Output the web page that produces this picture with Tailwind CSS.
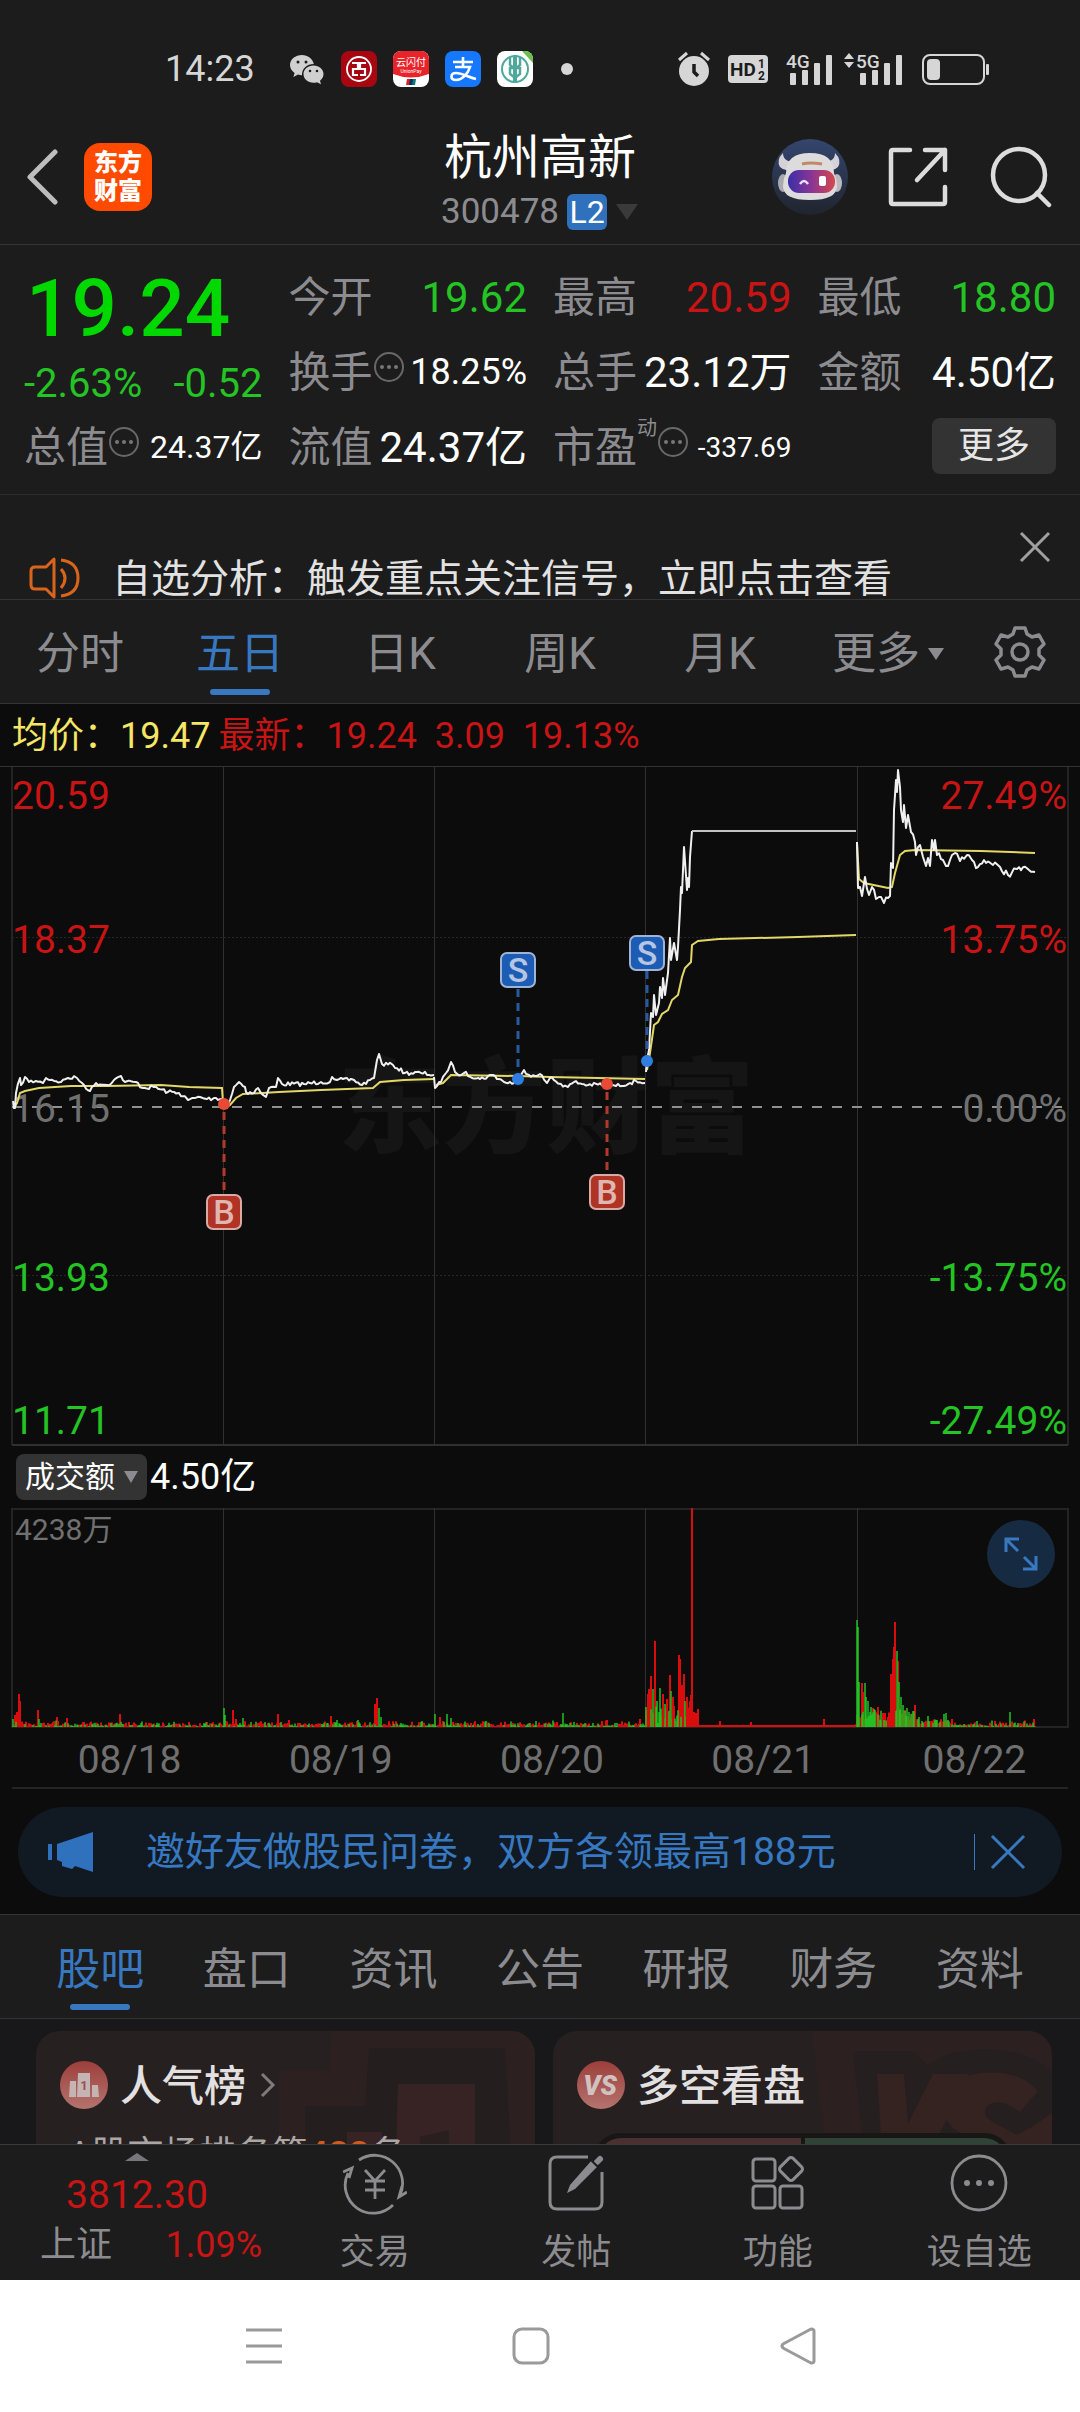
<!DOCTYPE html>
<html lang="zh-CN">
<head>
    <meta charset="UTF-8">
    <meta name="viewport" content="width=device-width, initial-scale=1.0">
    <title>杭州高新 300478</title>
    <script src="https://cdn.jsdelivr.net/npm/@tailwindcss/browser@4"></script>
</head>
<body class="bg-white font-['Roboto','Noto_Sans_CJK_SC',sans-serif] text-white">
    <div class="bg-[#1c1c1c]">
        <!-- Status bar -->
        <div class="flex h-[110px] items-center pt-7 pl-[165px] pr-[90px] text-[#d6d6d6]">
            <span class="w-[124px] text-[36px] leading-10">14:23</span>
            <div class="flex items-center gap-4">
                <svg class="h-9 w-9" viewBox="0 0 36 36" fill="#d0d0d0">
                    <path d="M13 4C6.500 4 1 8.300 1 14c0 3.300 1.800 6 4.600 7.900L4.400 26l4.600-2.400c1.300.4 2.600.6 4 .6-.4-6.600 5-11.300 11.800-11.300C23.500 7.500 18.800 4 13 4z"/>
                    <path d="M24.500 14.500c-5.600 0-10 3.700-10 8.600s4.400 8.700 10 8.700c1.200 0 2.400-.2 3.500-.6l4 2-1-3.500c2.200-1.600 3.500-4 3.500-6.600 0-4.900-4.400-8.600-10-8.600z"/>
                    <g fill="#1c1c1c"><circle cx="9" cy="11" r="1.500"/><circle cx="17" cy="11" r="1.500"/><circle cx="21" cy="20" r="1.300"/><circle cx="28" cy="20" r="1.300"/></g>
                </svg>
                <svg class="h-9 w-9" viewBox="0 0 36 36">
                    <rect width="36" height="36" rx="8" fill="#a80610"/>
                    <g fill="none" stroke="#fff"><circle cx="18" cy="18" r="12" stroke-width="1.800"/><path d="M11 12h6v6h-5v6h5M25 12h-6v6h5v6h-5" stroke-width="2.200"/></g>
                </svg>
                <svg class="h-9 w-9" viewBox="0 0 36 36">
                    <rect width="36" height="36" rx="8" fill="#fff"/>
                    <path d="M8 0h20a8 8 0 0 1 8 8v15q-18 7-36 0V8a8 8 0 0 1 8-8z" fill="#e8232a"/>
                    <text x="18" y="15" font-size="10" fill="#fff" text-anchor="middle">云闪付</text>
                    <text x="18" y="22" font-size="5" fill="#fff" text-anchor="middle">UnionPay</text>
                    <path d="M14 28h4l-1 6h-4z" fill="#d8222a"/><path d="M17 28h4l-1 6h-4z" fill="#12305c"/><path d="M20 28h3l-1 6h-3z" fill="#0b7a77"/>
                </svg>
                <svg class="h-9 w-9" viewBox="0 0 36 36">
                    <rect width="36" height="36" rx="8" fill="#1677ff"/>
                    <path d="M8 11h20M18 6v10M10 16h15c-2 7-8 13-14 13-6 0-6-7 0-7 6 0 12 4 20 6" fill="none" stroke="#fff" stroke-width="2.600"/>
                </svg>
                <svg class="h-9 w-9" viewBox="0 0 36 36">
                    <rect width="36" height="36" rx="8" fill="#fff"/>
                    <path d="M25 0h3a8 8 0 0 1 8 8v4z" fill="#6cc04a"/>
                    <g fill="none" stroke="#4fa89d"><circle cx="18" cy="18" r="13" stroke-width="2"/><path d="M18 4v28" stroke-width="4"/><path d="M13 6v8l5 4 5-4V6M13 17v6l5 4 5-4v-6z" stroke-width="2.500"/></g>
                </svg>
                <span class="ml-3 h-3 w-3 rounded-full bg-[#d6d6d6]"></span>
            </div>
            <div class="ml-auto flex items-center gap-[18px]">
                <svg class="h-9 w-8" viewBox="0 0 32 36" fill="#d6d6d6">
                    <circle cx="16" cy="20" r="15"/><path d="M1 9l8-7M31 9l-8-7" stroke="#d6d6d6" stroke-width="3"/>
                    <path d="M16 13v8l4 4" fill="none" stroke="#1c1c1c" stroke-width="3.500"/>
                </svg>
                <svg class="h-7 w-10" viewBox="0 0 40 28">
                    <rect width="40" height="28" rx="4" fill="#d6d6d6"/>
                    <g fill="#1c1c1c" font-weight="700"><text x="2" y="21" font-size="19">HD</text><text x="30" y="13" font-size="12">1</text><text x="30" y="25" font-size="12">2</text></g>
                </svg>
                <svg class="h-9 w-12" viewBox="0 0 48 36" fill="#d6d6d6">
                    <text x="0" y="17" font-size="19" font-weight="500">4G</text>
                    <rect x="4" y="22" width="6" height="12" rx="1"/><rect x="16" y="19" width="6" height="15" rx="1"/><rect x="28" y="12" width="6" height="22" rx="1"/><rect x="40" y="4" width="6" height="30" rx="1"/>
                </svg>
                <svg class="-ml-2 h-9 w-15" viewBox="0 0 60 36" fill="#d6d6d6">
                    <path d="M0 8l5-6 5 6zM0 11l5 6 5-6z"/>
                    <text x="12" y="17" font-size="19" font-weight="500">5G</text>
                    <rect x="16" y="22" width="6" height="12" rx="1"/><rect x="28" y="19" width="6" height="15" rx="1"/><rect x="40" y="12" width="6" height="22" rx="1"/><rect x="52" y="4" width="6" height="30" rx="1"/>
                </svg>
                <svg class="h-8 w-17" viewBox="0 0 68 32">
                    <rect x="1" y="2" width="61" height="29" rx="7" fill="none" stroke="#d6d6d6" stroke-width="2"/>
                    <rect x="5" y="6" width="13" height="21" rx="4" fill="#d6d6d6"/><rect x="64" y="11" width="3" height="11" rx="1" fill="#d6d6d6"/>
                </svg>
            </div>
        </div>

        <!-- Header -->
        <header class="grid h-[135px] grid-cols-[1fr_auto_1fr] items-center border-b border-[#333] px-6">
            <div class="flex items-center gap-6">
                <button aria-label="返回">
                    <svg class="h-14 w-9" viewBox="0 0 36 56" fill="none" stroke="#bdbdbd" stroke-width="5" stroke-linecap="round" stroke-linejoin="round"><path d="M31 3L6 28l25 25"/></svg>
                </button>
                <a href="#" class="flex h-17 w-17 flex-col items-center justify-center rounded-2xl bg-[#ff4a00] text-[24px] leading-7 font-black">
                    <span>东方</span><span>财富</span>
                </a>
            </div>
            <div class="flex flex-col items-center gap-2 pt-[6px]">
                <h1 class="text-[48px] leading-14">杭州高新</h1>
                <div class="flex items-center gap-2 text-[#8c8c90]">
                    <span class="text-[35px] leading-9">300478</span>
                    <span class="flex h-9 w-10 items-center justify-center rounded-md bg-[#3071bd] text-[32px] text-white">L2</span>
                    <svg class="h-4 w-6" viewBox="0 0 24 16"><path d="M1 0h22L12 16z" fill="#3a3a3a"/></svg>
                </div>
            </div>
            <div class="flex items-center justify-end gap-10 pr-1">
                <button aria-label="智能助手">
                    <svg class="h-[76px] w-[76px]" viewBox="0 0 76 76">
                        <defs>
                            <linearGradient id="visor"><stop offset="0" stop-color="#3a2fa8"/><stop offset=".5" stop-color="#8a3594"/><stop offset="1" stop-color="#d5484e"/></linearGradient>
                            <linearGradient id="orb" x2="0" y2="1"><stop offset="0" stop-color="#34466e"/><stop offset="1" stop-color="#20242e"/></linearGradient>
                        </defs>
                        <circle cx="38" cy="38" r="38" fill="url(#orb)"/>
                        <path d="M11 14q-7 7-3 14 4 4 9 3l6-8q-12 0-12-9zM63 14q7 7 3 14-4 4-9 3l-6-8q12 0 12-9z" fill="#d4d2d6"/>
                        <ellipse cx="11" cy="44" rx="5" ry="9" fill="#a9a9af"/><ellipse cx="65" cy="44" rx="5" ry="9" fill="#b9b9bf"/>
                        <path d="M14 34q0-20 24-20t24 20q3 6 3 13 0 14-27 14T11 47q0-7 3-13z" fill="#dedbdd"/>
                        <rect x="16" y="31" width="47" height="23" rx="11" fill="url(#visor)"/>
                        <path d="M28 45q4-6 8 0" fill="none" stroke="#e8e0ff" stroke-width="2.500"/><rect x="47" y="37" width="7" height="10" rx="2" fill="#fff"/>
                        <path d="M30 25q8-2 20 0" fill="none" stroke="#c08a66" stroke-width="3"/>
                    </svg>
                </button>
                <button aria-label="分享">
                    <svg class="h-[62px] w-[62px]" viewBox="0 0 62 62" fill="none" stroke="#dcdcdc" stroke-width="4.500" stroke-linecap="round" stroke-linejoin="round">
                        <path d="M22 4H5q-2 0-2 2v50q0 2 2 2h50q2 0 2-2V41M37 4h20v20M57 4L29 34"/>
                    </svg>
                </button>
                <button aria-label="搜索">
                    <svg class="h-[62px] w-[62px]" viewBox="0 0 62 62" fill="none" stroke="#dcdcdc" stroke-width="4.500" stroke-linecap="round"><circle cx="29" cy="29" r="26"/><path d="M47 47l12 12"/></svg>
                </button>
            </div>
        </header>

        <!-- Quote -->
        <section class="grid grid-cols-4 gap-x-[26px] border-b border-[#2c2c2c] px-6 pt-[15px] pb-[9px] text-[42px] leading-[75px] whitespace-nowrap">
            <div class="row-span-2">
                <div class="pl-[2px] text-[80px] leading-[98px] font-medium text-[#00d800]">19.24</div>
                <div class="flex justify-between text-[40px] leading-[52px] text-[#23c423]"><span>-2.63%</span><span>-0.52</span></div>
            </div>
            <div class="flex justify-between"><span class="text-[#8c8c90]">今开</span><span class="text-[#23c423]">19.62</span></div>
            <div class="flex justify-between"><span class="text-[#8c8c90]">最高</span><span class="text-[#c81414]">20.59</span></div>
            <div class="flex justify-between"><span class="text-[#8c8c90]">最低</span><span class="text-[#23c423]">18.80</span></div>

            <div class="flex items-center">
                <span class="text-[#8c8c90]">换手</span>
                <svg class="mb-3 h-8 w-8" viewBox="0 0 32 32"><circle cx="16" cy="16" r="14" fill="none" stroke="#68686a" stroke-width="2"/><g fill="#77777a"><circle cx="9" cy="16" r="2"/><circle cx="16" cy="16" r="2"/><circle cx="23" cy="16" r="2"/></g></svg>
                <span class="ml-auto text-[36px]">18.25%</span>
            </div>
            <div class="flex justify-between"><span class="text-[#8c8c90]">总手</span><span>23.12万</span></div>
            <div class="flex justify-between"><span class="text-[#8c8c90]">金额</span><span>4.50亿</span></div>

            <div class="flex items-center">
                <span class="text-[#8c8c90]">总值</span>
                <svg class="mb-3 h-8 w-8" viewBox="0 0 32 32"><circle cx="16" cy="16" r="14" fill="none" stroke="#68686a" stroke-width="2"/><g fill="#77777a"><circle cx="9" cy="16" r="2"/><circle cx="16" cy="16" r="2"/><circle cx="23" cy="16" r="2"/></g></svg>
                <span class="ml-auto text-[32px]">24.37亿</span>
            </div>
            <div class="flex justify-between"><span class="text-[#8c8c90]">流值</span><span>24.37亿</span></div>
            <div class="flex items-center">
                <span class="text-[#8c8c90]">市盈</span>
                <span class="self-start text-[20px] leading-9 text-[#8c8c90]">动</span>
                <svg class="mb-3 h-8 w-8" viewBox="0 0 32 32"><circle cx="16" cy="16" r="14" fill="none" stroke="#68686a" stroke-width="2"/><g fill="#77777a"><circle cx="9" cy="16" r="2"/><circle cx="16" cy="16" r="2"/><circle cx="23" cy="16" r="2"/></g></svg>
                <span class="ml-auto text-[28px]">-337.69</span>
            </div>
            <div class="flex items-center justify-end"><button class="mb-1 h-14 w-[124px] rounded-lg bg-[#333] text-[36px] leading-14 text-[#e6e6e6]">更多</button></div>
        </section>

        <!-- Notice -->
        <div class="flex h-[105px] items-end overflow-hidden border-b border-[#333] pr-7 pl-7 text-[39px] leading-10 text-[#e2e2e2]">
            <svg class="mr-8 h-[42px] w-13" viewBox="0 0 52 42" fill="none" stroke="#d9651c" stroke-width="3" stroke-linejoin="round"><path d="M26 2v38l-8-8H7q-4 0-4-4V14q0-4 4-4h11zM33 12q8 9 0 19M33 3q17 2 17 18T33 39"/></svg>
            <p>自选分析：触发重点关注信号，立即点击查看</p>
            <button class="ml-auto self-center" aria-label="关闭提示"><svg class="h-9 w-9" viewBox="0 0 36 36" stroke="#a0a0a0" stroke-width="3"><path d="M5 4l28 28M33 4L5 32"/></svg></button>
        </div>

        <!-- Period tabs -->
        <nav class="grid h-[104px] grid-cols-[repeat(6,1fr)_120px] border-b border-[#333] text-[44px] text-[#8c8c90]">
            <button class="pt-1">分时</button>
            <button class="relative pt-1 text-[#3878c0]">五日<span class="absolute bottom-2 left-1/2 h-[6px] w-15 -translate-x-1/2 rounded-full bg-[#3878c0]"></span></button>
            <button class="pt-1">日K</button>
            <button class="pt-1">周K</button>
            <button class="pt-1">月K</button>
            <button class="flex items-center justify-center gap-2 pt-1 pl-4">更多<svg class="h-3 w-4" viewBox="0 0 16 12"><path d="M0 0h16L8 12z" fill="#8c8c90"/></svg></button>
            <button class="flex items-center justify-center" aria-label="设置">
                <svg class="h-[52px] w-[52px]" viewBox="0 0 52 52" fill="none" stroke="#8c8c90" stroke-width="3.500" stroke-linejoin="round">
                    <path d="M21 2h10l2 6 5 3 7-2 5 9-5 5v6l5 5-5 9-7-2-5 3-2 6H21l-2-6-5-3-7 2-5-9 5-5v-6l-5-5 5-9 7 2 5-3z"/><circle cx="26" cy="26" r="8"/>
                </svg>
            </button>
        </nav>
    </div>

    <main class="bg-[#0c0c0c]">
        <div class="flex h-[63px] items-center border-b border-[#333] pt-[2px] pl-3 text-[36px] whitespace-pre">
            <span class="mr-2 text-[#f5e665]">均价：19.47</span><span class="text-[#c81414]">最新：19.24  3.09  19.13%</span>
        </div>

        <!-- Price chart -->
        <svg class="block w-full" viewBox="0 0 1080 679" fill="none">
            <text x="546" y="378" font-size="104" font-weight="900" fill="#151515" text-anchor="middle">东方财富</text>
            <path d="M12 0v678M1068 0v678" stroke="#242424" stroke-width="2"/>
            <path d="M223.500 0v678M434.500 0v678M645.500 0v678M857.500 0v678" stroke="#303030"/>
            <path d="M12 170.500h1056M12 508.500h1056" stroke="#262626" stroke-dasharray="2 2"/>
            <path d="M12 678h1056" stroke="#303030" stroke-width="2"/>
            <path d="M12 340h1056" stroke="#909090" stroke-width="2" stroke-dasharray="10 10"/>
            <g font-size="39">
                <g fill="#c81414"><text x="12" y="42">20.59</text><text x="12" y="186">18.37</text></g>
                <text x="12" y="355" fill="#707070">16.15</text>
                <g fill="#23c423"><text x="12" y="524">13.93</text><text x="12" y="667">11.71</text></g>
                <g text-anchor="end">
                    <g fill="#c81414"><text x="1067" y="42">27.49%</text><text x="1067" y="186">13.75%</text></g>
                    <text x="1067" y="355" fill="#707070">0.00%</text>
                    <g fill="#23c423"><text x="1067" y="524">-13.75%</text><text x="1067" y="667">-27.49%</text></g>
                </g>
            </g>
            <g id="avgLines" stroke="#e3d767" stroke-width="2"></g>
            <g id="priceLines" stroke="#f0f0f0" stroke-width="2" stroke-linejoin="round"></g>
            <!-- Buy / sell marks -->
            <g stroke-width="3" stroke-dasharray="8 6">
                <path d="M518 222v90M647 204v90" stroke="#285a9e"/>
                <path d="M224 345v82M607 325v82" stroke="#b03a2c"/>
            </g>
            <g fill="#2f7de0"><circle cx="518" cy="312" r="6"/><circle cx="647" cy="294" r="6"/></g>
            <g fill="#e84a36"><circle cx="224" cy="337" r="6"/><circle cx="607" cy="317" r="6"/></g>
            <g stroke-width="2">
                <g fill="#1c5cb4" stroke="#9fb4d4"><rect x="501" y="186" width="34" height="34" rx="6"/><rect x="630" y="169" width="34" height="34" rx="6"/></g>
                <g fill="#b03426" stroke="#d9a9a4"><rect x="207" y="428" width="34" height="34" rx="6"/><rect x="590" y="408" width="34" height="34" rx="6"/></g>
            </g>
            <g font-size="34" font-weight="500" text-anchor="middle">
                <g fill="#b4c6e2"><text x="518" y="215">S</text><text x="647" y="198">S</text></g>
                <g fill="#e0b6b2"><text x="224" y="457">B</text><text x="607" y="437">B</text></g>
            </g>
        </svg>

        <!-- Volume -->
        <div class="flex h-[62px] items-center gap-[3px] pl-4 text-[36px]">
            <div class="relative">
                <select aria-label="指标" class="block h-[46px] w-[131px] appearance-none rounded-lg bg-[#333] pl-[9px] text-[30px] leading-[46px] text-white"><option>成交额</option></select>
                <svg class="pointer-events-none absolute top-[17px] right-[9px] h-3 w-[14px]" viewBox="0 0 14 12"><path d="M0 0h14L7 12z" fill="#8c8c90"/></svg>
            </div>
            <span>4.50亿</span>
        </div>
        <div class="relative">
            <svg class="block w-full" viewBox="0 0 1080 220" fill="none">
                <path d="M12 1h1056v218H12z" stroke="#242424" stroke-width="2"/>
                <path d="M223.500 0v220M434.500 0v220M645.500 0v220M857.500 0v220" stroke="#303030"/>
                <text x="15" y="32" font-size="30" fill="#707070">4238万</text>
                <path id="redBars" stroke="#d90d0d" stroke-width="2"/>
                <path id="greenBars" stroke="#22c022" stroke-width="1.500"/>
            </svg>
            <button aria-label="全屏" class="absolute top-3 right-[25px] flex h-17 w-17 items-center justify-center rounded-full bg-[#162b42]">
                <svg class="h-9 w-9" viewBox="0 0 36 36" fill="none" stroke="#3878c0" stroke-width="3"><path d="M16 3H3v13M3 3l12 12M20 33h13V20M33 33L21 21"/></svg>
            </button>
        </div>
        <div class="grid h-[59px] grid-cols-5 pt-1 pl-6 text-center text-[39px] leading-14 text-[#707070]">
            <span>08/18</span><span>08/19</span><span>08/20</span><span>08/21</span><span>08/22</span>
        </div>
        <hr class="mx-3 border-t-2 border-[#242424]">

        <!-- Promo -->
        <div class="border-b border-[#333] px-[18px] pt-[18px] pb-[17px]">
            <div class="flex h-[90px] items-center rounded-full bg-[#111a23] pr-9 pl-[30px] text-[39px] text-[#3878c0]">
                <svg class="mr-13 h-10 w-[46px]" viewBox="0 0 46 40" fill="#3071bd"><path d="M0 12h4v16H0zM9 12L45 0v40l-18-6-3 3-10-3v-4l-5-2z"/></svg>
                <a href="#">邀好友做股民问卷，双方各领最高188元</a>
                <span class="ml-auto h-9 w-px bg-[#3878c0]"></span>
                <button class="ml-[15px]" aria-label="关闭活动"><svg class="h-9 w-9" viewBox="0 0 36 36" stroke="#3878c0" stroke-width="3"><path d="M2 2l32 32M34 2L2 34"/></svg></button>
            </div>
        </div>

        <!-- Content tabs -->
        <nav class="grid h-[104px] grid-cols-7 border-b border-[#333] bg-[#1c1c1c] px-[27px] text-[44px] text-[#8c8c90]">
            <button class="relative pt-[6px] text-[#3878c0]">股吧<span class="absolute bottom-2 left-1/2 h-[6px] w-15 -translate-x-1/2 rounded-full bg-[#3878c0]"></span></button>
            <button class="pt-[6px]">盘口</button>
            <button class="pt-[6px]">资讯</button>
            <button class="pt-[6px]">公告</button>
            <button class="pt-[6px]">研报</button>
            <button class="pt-[6px]">财务</button>
            <button class="pt-[6px]">资料</button>
        </nav>

        <section class="grid h-[125px] grid-cols-2 gap-[18px] overflow-hidden bg-[#18181a] pt-3 pr-7 pl-9">
            <div class="relative h-[200px] overflow-hidden rounded-3xl bg-[#272020] px-6 pt-7">
                <svg class="absolute top-0 right-0 h-[120px] w-[260px]" viewBox="0 0 260 120">
                    <path d="M57 0h203v120H4V39h50z" fill="#2c2120"/><path d="M94 17h136l6 103H30V75h60z" fill="#251e1e"/>
                    <path d="M123 53h77v67h-79zM72 101h35v19H72z" fill="#372323"/><path d="M145 106l29-7v21h-29z" fill="#2a1f1f"/>
                </svg>
                <a href="#" class="relative flex items-center text-[42px] leading-12 font-medium text-[#e2e0e0]">
                    <svg class="mr-3 h-12 w-12" viewBox="0 0 48 48"><defs><linearGradient id="badge" x2="0" y2="1"><stop offset="0" stop-color="#9c3f3b"/><stop offset="1" stop-color="#b5736e"/></linearGradient></defs><circle cx="24" cy="24" r="24" fill="url(#badge)"/><path d="M10 20h6v16H9zM18 12h12v24H17zM32 24h6l1 12h-7z" fill="#c4b4b3"/><text x="24" y="29" font-size="13" font-weight="700" fill="#9c4f4b" text-anchor="middle">1</text></svg>
                    <span class="pt-1">人气榜</span>
                    <svg class="ml-3 h-7 w-5" viewBox="0 0 20 28" fill="none" stroke="#807a7a" stroke-width="3"><path d="M4 3l11 11L4 25"/></svg>
                </a>
                <p class="relative mt-[22px] pl-2 text-[36px] leading-11 whitespace-nowrap text-[#aaa6a6]">A股市场排名第<span class="font-bold text-[#d35a1e]">488</span>名</p>
            </div>
            <div class="relative h-[200px] overflow-hidden rounded-3xl bg-[#272020] px-6 pt-7">
                <svg class="absolute top-0 right-0 h-[120px] w-[240px]" viewBox="0 0 240 120">
                    <path d="M0 0h240v120H14z" fill="#2c2120"/><path d="M41 20h60l15 14q20-16 60-16 42 2 64 22v80H52z" fill="#261f1f"/>
                    <path d="M65 43h27l4 50 25-50h36l-38 77H70z" fill="#352322"/><path d="M226 60q-20-22-58-18-36 6-36 35 0 14 12 22 14 10 34 14l5 7h57V82l-17 12-18 10-22-12q-16-8-7-18 12-8 32 7z" fill="#352322"/>
                </svg>
                <a href="#" class="relative flex items-center text-[42px] leading-12 font-medium text-[#e2e0e0]">
                    <svg class="mr-3 h-12 w-12" viewBox="0 0 48 48"><circle cx="24" cy="24" r="24" fill="url(#badge)"/><text x="23" y="34" font-size="27" font-weight="900" font-style="italic" fill="#d0c2c1" text-anchor="middle">VS</text></svg>
                    <span class="pt-1">多空看盘</span>
                </a>
                <div class="relative mx-4 mt-[22px] flex h-14 gap-1 overflow-hidden rounded-full border-5 border-[#191616] bg-[#191616]">
                    <span class="flex-1 bg-[#4a3030]"></span><span class="flex-1 bg-[#2f4437]"></span>
                </div>
            </div>
        </section>
    </main>

    <!-- Bottom bar -->
    <footer class="flex h-[136px] border-t border-[#3a3a3a] bg-[#1c1c1c] text-[35px] text-[#8c8c90]">
        <a href="#" class="flex w-[274px] flex-col items-center pt-2 text-[#c81414]">
            <svg class="h-2 w-6" viewBox="0 0 24 8"><path d="M0 8L12 0l12 8z" fill="#77777a"/></svg>
            <span class="mt-3 text-[39px] leading-11">3812.30</span>
            <span class="mt-1 flex w-full justify-between pr-3 pl-10 text-[36px] leading-12"><span class="text-[#8c8c90]">上证</span><span>1.09%</span></span>
        </a>
        <a href="#" class="flex flex-1 flex-col items-center pt-[6px]">
            <svg class="h-16 w-16" viewBox="0 0 64 64" fill="none" stroke="#8c8c90" stroke-width="2.800"><path d="M16 9A28 28 0 0 1 57 44M5 22A28 28 0 0 0 50 54M0 21l9-4-3 10M64 41l-8 5 3-11M22 19l10 11 10-11M32 30v18M22 30h20M22 39h20"/></svg>
            <span class="mt-[14px] leading-12">交易</span>
        </a>
        <a href="#" class="flex flex-1 flex-col items-center pt-[6px]">
            <svg class="h-16 w-16" viewBox="0 0 64 64" fill="none" stroke="#8c8c90" stroke-width="3"><path d="M44 6H13q-7 0-7 7v38q0 7 7 7h38q7 0 7-7V21"/><path d="M23 42l3-8 22-25 6 6-23 23z" fill="#8c8c90" stroke="none"/><path d="M53 11l3-3" stroke-width="6" stroke-linecap="round"/><path d="M47 9l8 8" stroke="#1c1c1c" stroke-width="2"/></svg>
            <span class="mt-[14px] leading-12">发帖</span>
        </a>
        <a href="#" class="flex flex-1 flex-col items-center pt-[6px]">
            <svg class="h-16 w-16" viewBox="0 0 64 64" fill="none" stroke="#8c8c90" stroke-width="3"><rect x="7" y="8" width="22" height="22" rx="3"/><rect x="7" y="35" width="22" height="22" rx="3"/><rect x="34" y="35" width="22" height="22" rx="3"/><rect x="36" y="9" width="18" height="18" rx="3" transform="rotate(45 45 18)"/></svg>
            <span class="mt-[14px] leading-12">功能</span>
        </a>
        <a href="#" class="flex flex-1 flex-col items-center pt-[6px]">
            <svg class="h-16 w-16" viewBox="0 0 64 64" fill="#8c8c90"><circle cx="32" cy="32" r="27" fill="none" stroke="#8c8c90" stroke-width="2.800"/><circle cx="20" cy="32" r="3"/><circle cx="32" cy="32" r="3"/><circle cx="44" cy="32" r="3"/></svg>
            <span class="mt-[14px] leading-12">设自选</span>
        </a>
    </footer>

    <!-- System navigation -->
    <div class="grid h-[132px] grid-cols-3 items-center justify-items-center bg-white pr-[149px] pl-[131px]">
        <button aria-label="最近任务"><svg class="h-10 w-10" viewBox="0 0 40 40" stroke="#9a9a9a" stroke-width="3"><path d="M2 4h36M2 20h36M2 36h36"/></svg></button>
        <button aria-label="主屏幕"><svg class="h-10 w-10" viewBox="0 0 40 40" fill="none" stroke="#9a9a9a" stroke-width="3"><rect x="3" y="3" width="34" height="34" rx="8"/></svg></button>
        <button aria-label="后退"><svg class="h-10 w-10" viewBox="0 0 40 40" fill="none" stroke="#9a9a9a" stroke-width="3" stroke-linejoin="round"><path d="M5 18L33 3q3 0 3 2v30q0 2-3 2L5 22q-2-2 0-4z"/></svg></button>
    </div>

    <script>
        // [x, y] pairs per trading day
        const price = [
            [13,334, 14,341, 15,341, 16,326, 20,311, 21,318, 25,310, 29,315, 36,314, 43,316, 46,311, 61,315, 68,311, 77,311, 82,316, 90,324, 96,316, 107,318, 114,313, 121,309, 125,315, 136,315, 143,321, 154,320, 168,325, 179,326, 188,333, 200,330, 207,332, 214,331, 223,332],
            [224,333, 227,341, 230,333, 234,320, 239,315, 245,320, 246,325, 254,326, 258,321, 261,326, 266,330, 269,321, 276,320, 278,311, 282,317, 304,317, 321,315, 330,315, 332,310, 337,313, 354,313, 362,318, 370,313, 374,311, 377,293, 379,287, 382,297, 393,298, 405,306, 421,306, 434,308],
            [434,310, 435,321, 441,315, 446,306, 451,295, 455,305, 461,308, 464,306, 480,312, 493,308, 504,315, 514,316, 520,311, 524,303, 529,308, 540,307, 547,316, 550,311, 561,317, 568,320, 574,315, 588,318, 607,317, 616,319, 630,316, 636,314, 645,316],
            [646,305, 647,293, 649,283, 651,246, 653,250, 654,228, 656,248, 659,236, 660,220, 662,231, 663,211, 665,228, 668,206, 670,171, 671,193, 674,176, 677,193, 678,180, 680,143, 681,120, 682,126, 684,80, 687,123, 688,111, 689,120, 690,90, 692,64],
            [857,75, 858,121, 860,120, 862,129, 865,110, 869,128, 872,120, 876,132, 879,130, 884,136, 888,131, 890,129, 891,96, 893,101, 894,43, 896,13, 897,25, 898,3, 900,20, 901,43, 903,55, 904,38, 906,61, 908,48, 911,65, 915,75, 916,88, 920,78, 923,90, 926,99, 928,91, 930,99, 932,73, 934,83, 935,73, 937,88, 943,93, 946,99, 950,93, 955,86, 960,94, 967,88, 972,93, 978,100, 984,93, 993,98, 1000,100, 1008,108, 1017,102, 1029,103, 1035,105],
        ];
        const average = [
            [14,341, 17,336, 20,326, 25,324, 39,321, 71,319, 107,319, 161,318, 189,320, 222,321, 223,336],
            [225,341, 230,338, 236,331, 243,327, 279,325, 321,323, 373,321, 380,315, 404,313, 434,312],
            [436,318, 443,316, 451,308, 518,309, 550,310, 645,312],
            [647,303, 650,286, 654,258, 658,255, 662,247, 668,243, 672,233, 678,228, 682,210, 685,201, 691,195, 692,178, 698,174, 719,172, 798,170, 856,168],
            [857,76, 859,112, 864,116, 888,121, 892,120, 895,106, 900,88, 905,84, 915,83, 981,84, 1035,86],
        ];
        // x, height, colour
        const spikes = [
            [13,8,'g'],[15,12,'r'],[17,15,'r'],[19,33,'r'],[20,26,'r'],[38,17,'r'],[39,8,'g'],[57,10,'r'],[67,9,'r'],[120,13,'r'],
            [224,19,'g'],[225,12,'g'],[233,17,'r'],[236,8,'r'],[243,9,'g'],[278,13,'r'],[289,7,'r'],[331,11,'r'],[337,7,'g'],[358,7,'g'],[375,23,'r'],[377,29,'r'],[379,19,'g'],[381,10,'g'],
            [435,13,'g'],[440,10,'r'],[447,13,'g'],[451,9,'g'],[536,6,'g'],[563,14,'g'],[607,7,'r'],[640,8,'r'],
            [646,17,'r'],[648,33,'r'],[649,38,'r'],[651,51,'r'],[653,38,'g'],[655,86,'r'],[657,26,'g'],[660,39,'g'],[663,33,'r'],[667,28,'r'],[670,52,'r'],[671,36,'g'],[673,30,'r'],[679,72,'r'],[680,68,'r'],[682,42,'r'],[684,53,'r'],[685,26,'g'],[687,30,'r'],[691,32,'r'],[692,219,'r'],[694,15,'r'],[696,14,'r'],[697,10,'r'],
            [720,6,'r'],[751,5,'r'],[824,8,'r'],
            [857,107,'g'],[858,100,'g'],[859,45,'g'],[862,44,'r'],[863,35,'r'],[865,44,'g'],[866,30,'g'],[868,26,'g'],[871,20,'g'],[873,19,'r'],[875,17,'g'],[878,20,'r'],[885,14,'r'],[891,53,'r'],[893,68,'r'],[894,80,'r'],[895,105,'r'],[897,76,'g'],[898,66,'r'],[899,45,'g'],[901,30,'g'],[903,22,'g'],[905,16,'g'],[907,19,'g'],[909,15,'g'],[911,13,'g'],[915,22,'r'],[919,10,'g'],[928,11,'g'],[944,13,'g'],[946,14,'g'],[952,8,'r'],[977,6,'g'],[995,6,'r'],[1010,15,'g'],[1034,8,'r'],
        ];

        let seed = 7;
        function rand() {
            seed = (seed * 16807) % 2147483647;
            return seed / 2147483647;
        }

        // Join the points, with some tick noise between them
        function linePath(points, noise) {
            let d = `M${points[0]} ${points[1]}`;
            for (let i = 2; i < points.length; i += 2) {
                const [x0, y0, x1, y1] = points.slice(i - 2, i + 2);
                for (let x = x0 + 2; noise && x < x1 - 1; x += 2) {
                    const y = y0 + (y1 - y0) * (x - x0) / (x1 - x0) + (rand() - 0.5) * noise;
                    d += `L${x} ${y.toFixed(1)}`;
                }
                d += `L${x1} ${y1}`;
            }
            return `<path d="${d}"/>`;
        }

        const limitUp = '<path d="M692 64h164" stroke="#c4c4c4"/>';
        document.getElementById('priceLines').innerHTML = price.map((day, i) => linePath(day, i === 4 ? 7 : 4)).join('') + limitUp;
        document.getElementById('avgLines').innerHTML = average.map(day => linePath(day, 0)).join('');

        function baseHeight(x) {
            if (x > 698 && x < 856) return 2;
            if (x > 645 && x <= 698) return 4 + rand() * 22;
            if (x >= 857 && x < 915) return 4 + rand() * 14;
            if (x >= 915 && x < 950) return 2 + rand() * 6;
            return 1 + rand() * rand() * 6;
        }

        const bars = { r: '', g: '' };
        for (let x = 13; x <= 1035; x++) {
            const up = (x > 686 && x < 857) || rand() > 0.4;
            bars[up ? 'r' : 'g'] += `M${x} 219v-${baseHeight(x).toFixed(1)}`;
        }
        spikes.forEach(([x, h, c]) => { bars[c] += `M${x} 219v-${h}`; });
        document.getElementById('redBars').setAttribute('d', bars.r);
        document.getElementById('greenBars').setAttribute('d', bars.g);
    </script>
</body>
</html>
